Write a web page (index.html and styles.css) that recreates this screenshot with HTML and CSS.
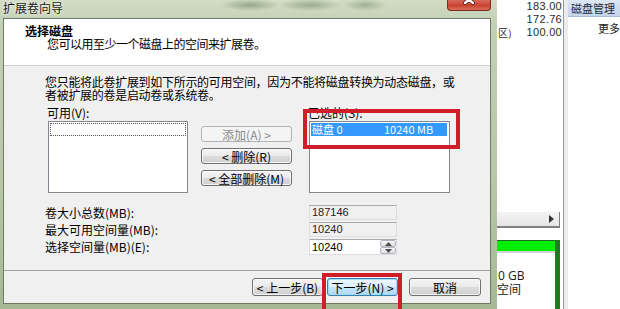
FILE: index.html
```html
<!DOCTYPE html>
<html lang="zh-CN">
<head>
<meta charset="utf-8">
<title>扩展卷向导</title>
<link rel="stylesheet" href="styles.css">
</head>
<body>
<div class="screen">
  <div class="dialog">
    <div class="titlebar">
      <span class="title">扩展卷向导</span>
      <span class="close"><svg width="44" height="11" viewBox="0 0 44 11"><path d="M18 -3 L26 4 M26 -3 L18 4" stroke="#5a1a10" stroke-width="4" stroke-linecap="round"/><path d="M18 -3 L26 4 M26 -3 L18 4" stroke="#fff" stroke-width="2.4" stroke-linecap="round"/></svg></span>
    </div>
    <div class="client">
      <div class="header">
        <div class="h-title">选择磁盘</div>
        <div class="h-sub">您可以用至少一个磁盘上的空间来扩展卷。</div>
      </div>
      <div class="body">
        <p class="intro">您只能将此卷扩展到如下所示的可用空间，因为不能将磁盘转换为动态磁盘，或<br>者被扩展的卷是启动卷或系统卷。</p>
        <div class="picker">
          <div class="col col-left">
            <div class="lbl">可用(V):</div>
            <div class="listbox"><div class="focusrow"></div></div>
          </div>
          <div class="btncol">
            <button class="btn disabled">添加(A) &gt;</button>
            <button class="btn">&lt; 删除(R)</button>
            <button class="btn">&lt; 全部删除(M)</button>
          </div>
          <div class="col col-right">
            <div class="lbl">已选的(S):</div>
            <div class="listbox"><div class="selrow"><span class="sel-name">磁盘 0</span><span>10240 MB</span></div></div>
          </div>
        </div>
        <div class="fields">
          <div class="flabel">卷大小总数(MB):</div>
          <div class="field ro">187146</div>
          <div class="flabel">最大可用空间量(MB):</div>
          <div class="field ro">10240</div>
          <div class="flabel">选择空间量(MB)(E):</div>
          <div class="field spin"><span class="spin-val">10240</span><span class="spin-btns"><span class="sb"><svg width="7" height="4" viewBox="0 0 7 4"><path d="M0 4 L3.5 0 L7 4 Z" fill="#4d4d4d"/></svg></span><span class="sb"><svg width="7" height="4" viewBox="0 0 7 4"><path d="M0 0 L3.5 4 L7 0 Z" fill="#4d4d4d"/></svg></span></span></div>
        </div>
      </div>
      <div class="footer">
        <button class="btn fbtn">&lt; 上一步(B)</button>
        <button class="btn fbtn default">下一步(N) &gt;</button>
        <button class="btn fbtn cancel">取消</button>
      </div>
    </div>
    <div class="hl hl-sel"></div>
    <div class="hl hl-next"></div>
  </div>
  <div class="bgwin">
    <div class="pane-vol">
      <div class="vrow">183.00</div>
      <div class="vrow">172.76</div>
      <div class="vrow vrow-split"><span class="cut">区)</span><span>100.00</span></div>
      <div class="vfill"></div>
      <div class="hscroll"><svg width="5" height="8" viewBox="0 0 5 8"><path d="M0 0 L5 4 L0 8 Z" fill="#333"/></svg></div>
      <div class="vgap"></div>
      <div class="part">
        <div class="part-head"></div>
        <div class="part-body">
          <div class="part-text cutnum">0 GB</div>
          <div class="part-text">空间</div>
        </div>
      </div>
    </div>
    <div class="splitter"></div>
    <div class="pane-act">
      <div class="act-head">磁盘管理</div>
      <div class="act-item">更多</div>
    </div>
  </div>
</div>
</body>
</html>
```

FILE: styles.css
```css
* { box-sizing: border-box; }
html, body { margin: 0; padding: 0; }
body {
  width: 620px;
  height: 309px;
  overflow: hidden;
  font-family: "Noto Sans CJK SC", "Noto Sans", sans-serif;
  font-size: 12px;
  color: #000;
  background: #fff;
}
.screen {
  display: flex;
  width: 620px;
  height: 309px;
  overflow: hidden;
}

/* ---------- dialog ---------- */
.dialog {
  position: relative;
  flex: 0 0 497px;
  height: 309px;
  display: flex;
  flex-direction: column;
  padding: 0 6px 5px 3px;
  background:
    radial-gradient(ellipse 30px 6px at 250px 5px, rgba(105,125,92,0.55), transparent),
    radial-gradient(ellipse 32px 6px at 310px 5px, rgba(105,125,92,0.5), transparent),
    radial-gradient(ellipse 22px 6px at 365px 5px, rgba(105,125,92,0.45), transparent),
    linear-gradient(180deg, #d2dcc6 0%, #c2d0b3 8%, #b6c6a7 60%, #a5b896 100%);
}
.titlebar {
  height: 18px;
  display: flex;
  align-items: flex-start;
  margin: 0 -6px 0 -3px;
}
.title {
  padding-left: 3px;
  line-height: 16px;
  font-size: 12px;
  color: #1a1a1a;
  text-shadow: 0 0 4px #f4f7f0, 0 0 2px #f4f7f0;
}
.close {
  margin-left: auto;
  margin-right: 6px;
  width: 44px;
  height: 11px;
  display: block;
  border: 1px solid #7c2a1e;
  border-top: none;
  border-radius: 0 0 4px 4px;
  background: linear-gradient(180deg, #d66a5a 0%, #c9432f 55%, #d8705d 100%);
  overflow: hidden;
}
.close svg { display: block; margin: -1px 0 0 -1px; }

.client {
  flex: 1;
  display: flex;
  flex-direction: column;
  border: 1px solid #707a69;
  background: #f0f0f0;
}
.header {
  height: 47px;
  flex: 0 0 47px;
  background: #fff;
  border-bottom: 1px solid #cfcfcf;
  padding: 6px 0 0 21px;
}
.h-title {
  font-weight: bold;
  line-height: 12px;
  font-size: 12px;
}
.h-sub {
  margin: 0 0 0 22px;
  line-height: 14px;
  font-size: 12px;
  letter-spacing: -0.5px;
}
.body {
  flex: 0 0 205px;
  height: 205px;
  border-bottom: 1px solid #a0a0a0;
  padding: 9px 0 0 0;
}
.intro {
  margin: 0;
  padding-left: 41px;
  line-height: 13px;
  font-size: 12px;
  letter-spacing: -0.3px;
  white-space: nowrap;
}
.picker {
  display: flex;
  align-items: flex-start;
  margin-top: 5px;
  padding-left: 44px;
}
.col { display: flex; flex-direction: column; }
.col-left { width: 140px; }
.col-right { width: 141px; margin-left: 17px; }
.lbl {
  line-height: 14px;
  height: 14px;
  margin-left: -1px;
  margin-bottom: 1px;
}
.listbox {
  height: 72px;
  background: #fff;
  border: 1px solid #828790;
  padding: 1px;
  position: relative;
}
.focusrow {
  height: 13px;
  border: 1px dotted #555;
}
.selrow {
  height: 13px;
  margin-right: 1px;
  background: #3399ff;
  color: #fff;
  display: flex;
  line-height: 13px;
  font-size: 11px;
  padding-left: 1px;
}
.sel-name { width: 72px; }

.btncol {
  display: flex;
  flex-direction: column;
  gap: 6px;
  width: 91px;
  margin-left: 13px;
  padding-top: 20px;
}
.btn {
  font-family: inherit;
  font-size: 12px;
  height: 16px;
  line-height: 13px;
  padding: 0;
  border: 1px solid #707070;
  border-radius: 3px;
  color: #000;
  background: linear-gradient(180deg, #f4f4f4 0%, #ebebeb 48%, #dcdcdc 52%, #d0d0d0 100%);
  box-shadow: inset 0 0 0 1px rgba(255,255,255,0.75);
}
.btn.disabled {
  color: #8a8a8a;
  border-color: #b0b4b7;
  background: #f4f4f4;
  box-shadow: none;
}

.fields {
  display: grid;
  grid-template-columns: 264px 88px;
  grid-template-rows: 15px 15px 16px;
  row-gap: 2px;
  align-items: center;
  margin-top: 12px;
  padding-left: 41px;
}
.flabel {
  line-height: 14px;
  white-space: nowrap;
}
.field {
  height: 100%;
  font-family: "Liberation Sans", "Noto Sans", sans-serif;
  font-size: 11px;
  line-height: 13px;
  padding-left: 2px;
}
.field.ro {
  border: 1px solid #dcdde3;
  border-top-color: #a9abb1;
  background: #f0f0f0;
  color: #222;
}
.field.spin {
  display: flex;
  background: #fff;
  border: 1px solid #dcdde3;
  border-top-color: #a9abb1;
  padding-left: 2px;
}
.spin-val { flex: 1; line-height: 14px; }
.spin-btns {
  display: flex;
  flex-direction: column;
  width: 16px;
}
.sb {
  flex: 1;
  display: flex;
  align-items: center;
  justify-content: center;
  border: 1px solid #b5b8be;
  border-radius: 2px;
  background: linear-gradient(180deg, #f6f6f6, #dedede);
}
.sb svg { display: block; }

.footer {
  flex: 1;
  display: flex;
  justify-content: flex-end;
  align-items: flex-start;
  padding: 7px 9px 0 0;
}
.fbtn { height: 18px; line-height: 15px; }
.fbtn:nth-child(1) { width: 71px; }
.fbtn.default {
  width: 71px;
  margin-left: 4px;
  border-color: #3c7fb1;
  background: linear-gradient(180deg, #ecf7fd 0%, #dcf0fb 48%, #c4e5f8 52%, #b2d9f1 100%);
  box-shadow: inset 0 0 0 1px #9fdcfb;
}
.fbtn.cancel { width: 72px; margin-left: 11px; }

.hl {
  position: absolute;
  border: 4px solid #d01d29;
  pointer-events: none;
}
.hl-sel { left: 303px; top: 109px; width: 157px; height: 40px; }
.hl-next { left: 322px; top: 273px; width: 80px; height: 42px; }

/* ---------- background window ---------- */
.bgwin {
  flex: 1;
  display: flex;
  height: 309px;
  overflow: hidden;
  background: #fff;
}
.pane-vol {
  flex: 0 0 66px;
  display: flex;
  flex-direction: column;
  overflow: hidden;
  font-family: "Liberation Sans", "Noto Sans", sans-serif;
  font-size: 11px;
  color: #2b2b2b;
}
.vrow {
  height: 13px;
  flex: 0 0 13px;
  line-height: 13px;
  text-align: right;
  padding-right: 1px;
  letter-spacing: 0.3px;
}
.vrow-split { display: flex; justify-content: space-between; }
.cut {
  margin-left: 1px;
  font-family: "Noto Sans CJK SC", sans-serif;
  font-size: 10px;
  line-height: 13px;
}
.vfill { height: 173px; flex: 0 0 173px; }
.hscroll {
  height: 16px;
  flex: 0 0 16px;
  background: linear-gradient(180deg, #f3f3f3, #e6e6e6);
  border-bottom: 2px solid #808080;
  border-right: 1px solid #808080;
  margin-right: 3px;
  display: flex;
  align-items: center;
  justify-content: flex-end;
  padding-right: 5px;
}
.hscroll svg { display: block; }
.vgap { height: 12px; flex: 0 0 12px; }
.part {
  flex: 1;
  margin-right: 3px;
  border-top: 1px solid #1e6a1e;
  border-right: 5px solid #207a20;
  display: flex;
  flex-direction: column;
}
.part-head { height: 12px; flex: 0 0 12px; background: #00ee00; border-bottom: 2px solid #d4d4d4; }
.part-body { padding-top: 15px; background: #fff; flex: 1; }
.part-text {
  line-height: 15px;
  font-size: 12px;
  color: #1a1a1a;
  white-space: nowrap;
}
.cutnum { margin-left: 1px; font-family: "Open Sans", sans-serif; }
.splitter {
  flex: 0 0 5px;
  border-left: 1px solid #9a9a9a;
  background: #ececec;
}
.pane-act {
  flex: 1;
  overflow: hidden;
  white-space: nowrap;
}
.act-head {
  height: 17px;
  line-height: 17px;
  padding-left: 3px;
  background: linear-gradient(180deg, #dde7f4, #c4d4ea);
  border-bottom: 1px solid #a9bcd6;
  font-size: 11px;
  color: #1e2a3a;
}
.act-item {
  padding-left: 30px;
  line-height: 18px;
  margin-top: 2px;
  font-size: 11px;
  color: #222;
}
```
